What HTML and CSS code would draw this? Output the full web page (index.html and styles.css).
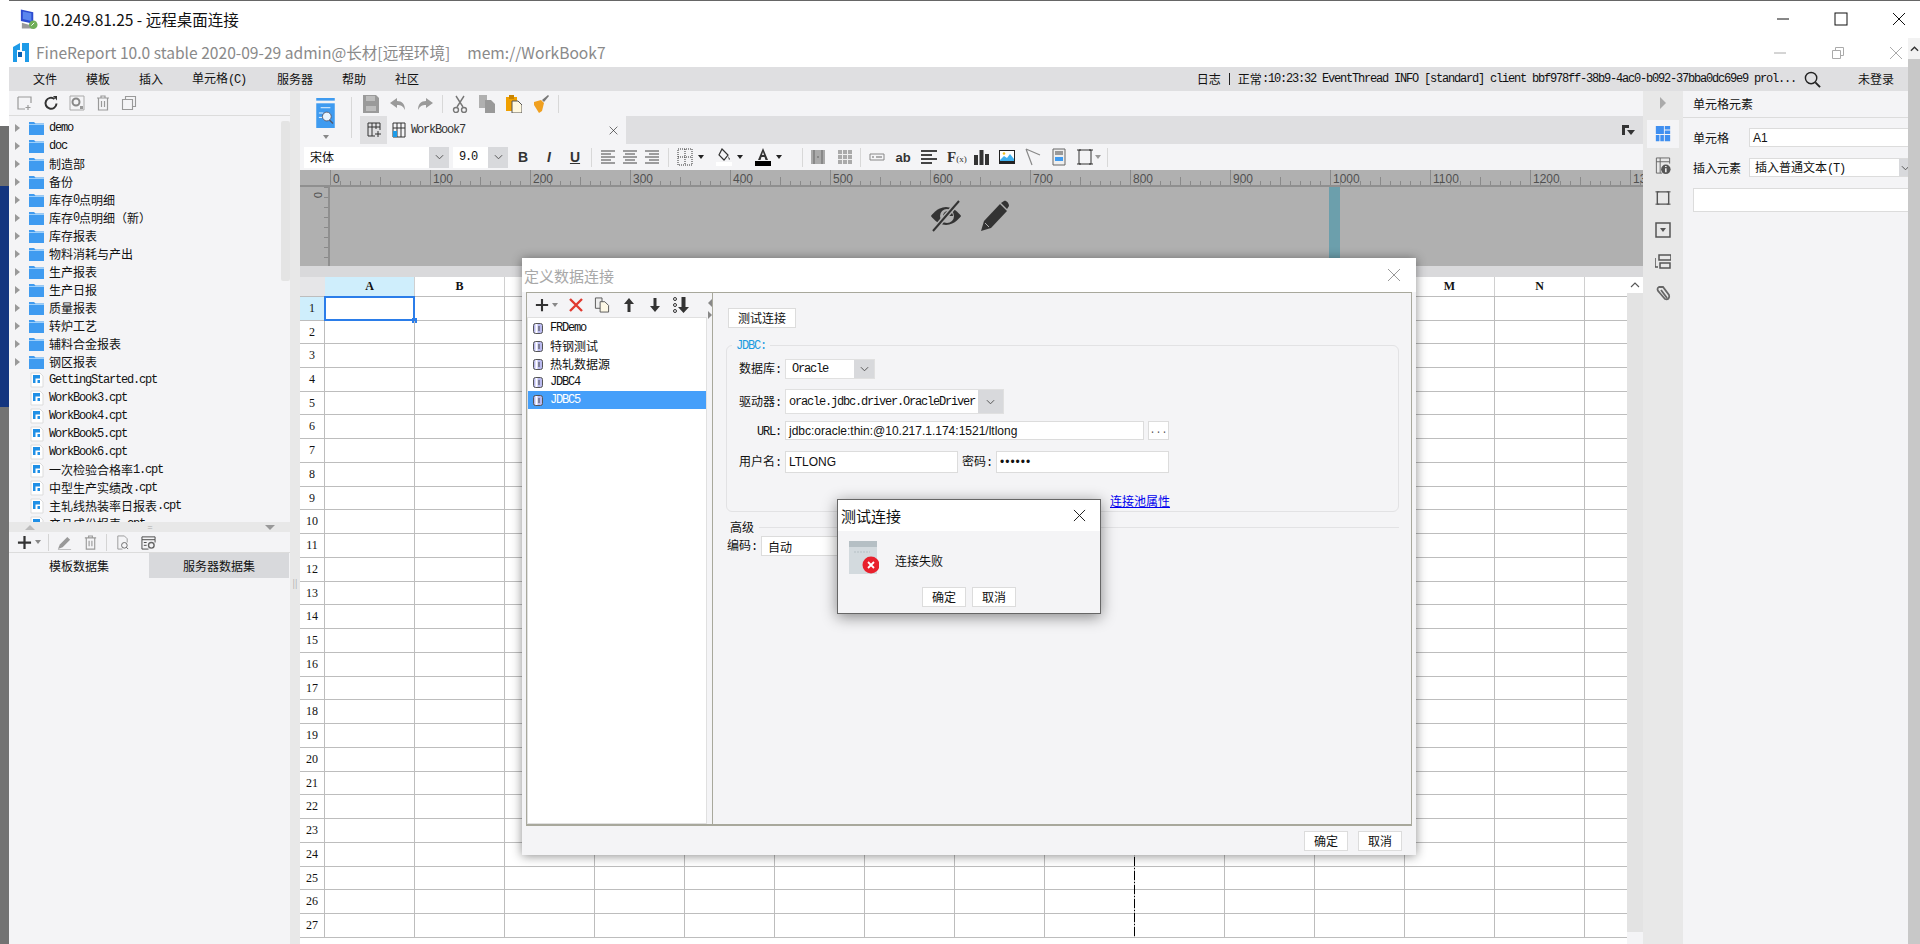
FILE: index.html
```html
<!DOCTYPE html>
<html lang="zh-CN">
<head>
  <meta charset="UTF-8" />
  <title>FineReport 远程桌面连接</title>
  <link rel="stylesheet" href="styles.css">
</head>
<body>

  <svg class="defs" width="0" height="0">
    <symbol id="folder" viewBox="0 0 15 14"><path d="M0 1h5l1.500 1.500H15V14H0z" fill="#3f9bf0"/><path d="M0 3.500h15" stroke="#9fd0fa" stroke-width="1"/></symbol>
    <symbol id="cpt" viewBox="0 0 14 16"><path d="M1 1h9l3 3v11H1z" fill="#fff" stroke="#dcdcdc"/><path d="M3 3h7v8H7.500V8H10V6.500H5.500V11H3z" fill="#1f8fe6"/></symbol>
    <symbol id="db" viewBox="0 0 10 11"><rect x="0.500" y="0.500" width="9" height="10" rx="2" fill="#b9b9ee" stroke="#555"/><path d="M3.500 1v9" stroke="#fff" stroke-width="2"/><path d="M6 3v5" stroke="#444"/></symbol>
    <symbol id="plus" viewBox="0 0 16 16"><path d="M8 1v14M1 8h14" stroke="#333" stroke-width="2.400"/></symbol>
    <symbol id="copy" viewBox="0 0 16 17"><path d="M1 1h7v11H1z" fill="#eee" stroke="#555"/><path d="M6 5h5l4 4v7H6z" fill="#fdf8e6" stroke="#555"/></symbol>
    <symbol id="trash" viewBox="0 0 14 16"><path d="M1 3h12M5 3V1h4v2M2.500 3v12h9V3M5.500 6v6M8.500 6v6" fill="none" stroke="#999" stroke-width="1.200"/></symbol>
    <symbol id="close" viewBox="0 0 14 14"><path d="M1 1l12 12M13 1L1 13" fill="none" stroke="currentColor" stroke-width="1"/></symbol>
    <symbol id="chev" viewBox="0 0 10 6"><path d="M1 1l4 4 4-4" fill="none" stroke="#555" stroke-width="1.100"/></symbol>
  </svg>

  <div class="page">
    <div class="edge">
      <div class="edge-white"></div>
      <div class="edge-grey"></div>
      <div class="edge-navy"></div>
      <div class="edge-dark"></div>
    </div>

    <div class="window">
      <!-- rdp title -->
      <div class="rdp-title">
        <svg class="rdp-icon" viewBox="0 0 20 24"><path d="M2 2l13 3v12L2 14z" fill="#2c4bd0"/><path d="M4 4l9 2v8L4 12z" fill="#5a86ee"/><path d="M3 16l11 3v3H3z" fill="#999"/><circle cx="15" cy="18" r="4.500" fill="#6fae58"/><path d="M13 19l3-3" stroke="#fff"/></svg>
        <span class="rdp-text">10.249.81.25 - 远程桌面连接</span>
        <div class="win-btns">
          <svg class="win-btn" viewBox="0 0 14 14"><path d="M1 7h12" stroke="#111" stroke-width="1"/></svg>
          <svg class="win-btn" viewBox="0 0 14 14"><rect x="1" y="1" width="12" height="12" fill="none" stroke="#111" stroke-width="1"/></svg>
          <svg class="win-btn win-close"><use href="#close"/></svg>
        </div>
      </div>

      <div class="rdp-body">
        <div class="app">
          <div class="app-title">
            <svg class="fr-logo" viewBox="0 0 16 19"><path d="M0 4l7-4v7H4v12H0z" fill="#1e9be8"/><path d="M9 0h7v19h-4V8H9z" fill="#1e9be8"/><path d="M5 9h4v5H5z" fill="#0a5fb0"/></svg>
            <span class="app-name">FineReport 10.0 stable 2020-09-29 admin@长材[远程环境]</span>
            <span class="app-file">mem://WorkBook7</span>
            <div class="app-btns">
              <svg class="app-btn" viewBox="0 0 14 14"><path d="M1 7h12" stroke="#aaa"/></svg>
              <svg class="app-btn" viewBox="0 0 14 14"><path d="M1.500 4.500h8v8h-8zM4.500 4.500v-3h8v8h-3" fill="none" stroke="#aaa"/></svg>
              <svg class="app-btn app-x"><use href="#close"/></svg>
            </div>
          </div>

          <!-- menu -->
          <div class="menubar">
            <a class="m-file">文件</a>
            <a class="m-tpl">模板</a>
            <a class="m-ins">插入</a>
            <a class="m-cell">单元格<span class="lat">(C)</span></a>
            <a class="m-srv">服务器</a>
            <a class="m-help">帮助</a>
            <a class="m-soc">社区</a>
            <div class="status">日志<i class="status-bar"></i>正常<span class="lat">:10:23:32 EventThread INFO [standard] client bbf978ff-38b9-4ac0-b092-37bba0dc69e9 prol...</span></div>
            <svg class="search" viewBox="0 0 18 18"><circle cx="7.500" cy="7.500" r="6" fill="none" stroke="#222" stroke-width="1.500"/><path d="M12 12l5 5" stroke="#222" stroke-width="2"/></svg>
            <a class="m-login">未登录</a>
          </div>

          <div class="workspace">
            <!-- left panel -->
            <div class="left">
              <div class="left-tools">
                <svg class="lt" viewBox="0 0 16 16"><path d="M1 2h13v6M1 2v12h7M11 10v5M8.500 12.500h5" fill="none" stroke="#999" stroke-width="1.200"/></svg>
                <svg class="lt" viewBox="0 0 16 16"><path d="M13.500 8.500a5.500 5.500 0 1 1-2-4.500" fill="none" stroke="#333" stroke-width="2"/><path d="M10 1l4 0v4.500z" fill="#333"/></svg>
                <svg class="lt" viewBox="0 0 16 16"><path d="M1 1h14v14H1z" fill="none" stroke="#aaa"/><circle cx="7" cy="7" r="3.500" fill="none" stroke="#888" stroke-width="2"/><path d="M11 11h3v3h-3z" fill="#999"/></svg>
                <svg class="lt"><use href="#trash"/></svg>
                <svg class="lt" viewBox="0 0 16 16"><path d="M1.500 4.500h10v10h-10zM4.500 4.500v-3h10v10h-3" fill="none" stroke="#999" stroke-width="1.100"/></svg>
              </div>
              <div class="tree-wrap">
                <ul class="tree">
                  <li><i class="tw"></i><svg class="ico-folder"><use href="#folder"/></svg><span class="lat">demo</span></li>
                  <li><i class="tw"></i><svg class="ico-folder"><use href="#folder"/></svg><span class="lat">doc</span></li>
                  <li><i class="tw"></i><svg class="ico-folder"><use href="#folder"/></svg>制造部</li>
                  <li><i class="tw"></i><svg class="ico-folder"><use href="#folder"/></svg>备份</li>
                  <li><i class="tw"></i><svg class="ico-folder"><use href="#folder"/></svg>库存<span class="lat">0</span>点明细</li>
                  <li><i class="tw"></i><svg class="ico-folder"><use href="#folder"/></svg>库存<span class="lat">0</span>点明细（新）</li>
                  <li><i class="tw"></i><svg class="ico-folder"><use href="#folder"/></svg>库存报表</li>
                  <li><i class="tw"></i><svg class="ico-folder"><use href="#folder"/></svg>物料消耗与产出</li>
                  <li><i class="tw"></i><svg class="ico-folder"><use href="#folder"/></svg>生产报表</li>
                  <li><i class="tw"></i><svg class="ico-folder"><use href="#folder"/></svg>生产日报</li>
                  <li><i class="tw"></i><svg class="ico-folder"><use href="#folder"/></svg>质量报表</li>
                  <li><i class="tw"></i><svg class="ico-folder"><use href="#folder"/></svg>转炉工艺</li>
                  <li><i class="tw"></i><svg class="ico-folder"><use href="#folder"/></svg>辅料合金报表</li>
                  <li><i class="tw"></i><svg class="ico-folder"><use href="#folder"/></svg>钢区报表</li>
                  <li><i class="tw-none"></i><svg class="ico-cpt"><use href="#cpt"/></svg><span class="lat">GettingStarted.cpt</span></li>
                  <li><i class="tw-none"></i><svg class="ico-cpt"><use href="#cpt"/></svg><span class="lat">WorkBook3.cpt</span></li>
                  <li><i class="tw-none"></i><svg class="ico-cpt"><use href="#cpt"/></svg><span class="lat">WorkBook4.cpt</span></li>
                  <li><i class="tw-none"></i><svg class="ico-cpt"><use href="#cpt"/></svg><span class="lat">WorkBook5.cpt</span></li>
                  <li><i class="tw-none"></i><svg class="ico-cpt"><use href="#cpt"/></svg><span class="lat">WorkBook6.cpt</span></li>
                  <li><i class="tw-none"></i><svg class="ico-cpt"><use href="#cpt"/></svg>一次检验合格率<span class="lat">1.cpt</span></li>
                  <li><i class="tw-none"></i><svg class="ico-cpt"><use href="#cpt"/></svg>中型生产实绩改<span class="lat">.cpt</span></li>
                  <li><i class="tw-none"></i><svg class="ico-cpt"><use href="#cpt"/></svg>主轧线热装率日报表<span class="lat">.cpt</span></li>
                  <li><i class="tw-none"></i><svg class="ico-cpt"><use href="#cpt"/></svg>产品成份报表<span class="lat">.cpt</span></li>
                </ul>
                <div class="tree-scroll"><div class="tree-thumb"></div></div>
              </div>
              <div class="left-sash"><i class="up"></i><b>=</b><i class="down"></i></div>
              <div class="ds-tools">
                <svg class="ds-plus"><use href="#plus"/></svg><i class="caret-s"></i>
                <i class="ds-sep"></i>
                <svg class="lt2" viewBox="0 0 16 16"><path d="M1 15l2-5 8-8 3 3-8 8z" fill="#999"/><path d="M1 15.500h14" stroke="#bbb"/></svg>
                <svg class="lt2"><use href="#trash"/></svg>
                <i class="ds-sep"></i>
                <svg class="lt2" viewBox="0 0 16 16"><path d="M3 1h7l3 3v4M3 1v14h5" fill="none" stroke="#999"/><circle cx="10" cy="11" r="3" fill="none" stroke="#666"/><path d="M12 13l2 2" stroke="#666"/></svg>
                <svg class="lt2" viewBox="0 0 16 16"><path d="M1 2h14v3H1zM1 5v10h7M15 5v3" fill="none" stroke="#444"/><circle cx="11" cy="11" r="3" fill="none" stroke="#666" stroke-width="1.500"/><path d="M3 8h3M3 11h3" stroke="#444"/></svg>
              </div>
              <div class="ds-tabs">
                <div class="ds-tab">模板数据集</div>
                <div class="ds-tab on">服务器数据集</div>
              </div>
            </div>
            <div class="sash"><b>||</b></div>

            <!-- center -->
            <div class="center">
              <div class="center-top">
                <div class="big-btn">
                  <svg class="big-ico" viewBox="0 0 21 34"><path d="M0 0h21v3H0z" fill="#3f9bf0"/><path d="M0 6h21v28H0z" fill="#3f9bf0"/><path d="M5 11h11M3 17h5M3 22h5" stroke="#fff"/><circle cx="12" cy="21" r="5" fill="#e8f3fd" stroke="#556"/><path d="M15 25l4 4" stroke="#556" stroke-width="1.500"/></svg>
                  <i class="caret-s big-caret"></i>
                  <i class="big-sep"></i>
                </div>
                <div class="top-col">
                  <div class="main-tools">
                    <svg class="mt" viewBox="0 0 16 18"><path d="M0 0h13l3 3v15H0z" fill="#9a9a9a"/><path d="M3 1h9v5H3z" fill="#bdbdbd"/><path d="M3 11h10v5H3z" fill="#bdbdbd"/></svg>
                    <svg class="mt" viewBox="0 0 16 16"><path d="M7 2L0 7l7 5V9c4 0 6 1 8 5 0-6-3-9-8-9z" fill="#9a9a9a"/></svg>
                    <svg class="mt" viewBox="0 0 16 16"><path d="M9 2l7 5-7 5V9c-4 0-6 1-8 5 0-6 3-9 8-9z" fill="#9a9a9a"/></svg>
                    <i class="mt-sep"></i>
                    <svg class="mt" viewBox="0 0 16 18"><path d="M4 1l7 11M12 1L5 12" stroke="#777" stroke-width="1.400"/><circle cx="4" cy="15" r="2.500" fill="none" stroke="#777" stroke-width="1.400"/><circle cx="12" cy="15" r="2.500" fill="none" stroke="#777" stroke-width="1.400"/></svg>
                    <svg class="mt" viewBox="0 0 16 18"><path d="M0 0h8v13H0z" fill="#b0b0b0"/><path d="M6 5h6l4 4v9H6z" fill="#999"/></svg>
                    <svg class="mt" viewBox="0 0 16 18"><path d="M0 2h11v14H0z" fill="#f0a000"/><path d="M3 0h5v4H3z" fill="#c98400"/><path d="M6 6h6l4 4v8H6z" fill="#fff8e0" stroke="#555"/></svg>
                    <svg class="mt" viewBox="0 0 16 18"><path d="M9 5l6-5 1 1-5 6z" fill="#777"/><path d="M1 7l7-2 3 3-2 8-3 2-5-8z" fill="#f0a020"/></svg>
                    <i class="mt-sep"></i>
                  </div>
                  <div class="tab-row">
                    <div class="tab-new"><svg viewBox="0 0 14 16"><path d="M1 1h12v7M1 1v13h7M1 5h12M5 1v13M9 1v6M11 9v6M8 12h6" fill="none" stroke="#333"/></svg></div>
                    <div class="tab">
                      <svg viewBox="0 0 14 16"><path d="M1 1h12v14H1zM1 6h12M5 1v14M9 1v14" fill="none" stroke="#333"/><path d="M1 9h4v6H1z" fill="#1e9be8"/></svg>
                      <span class="lat">WorkBook7</span>
                      <svg class="tab-x"><use href="#close"/></svg>
                    </div>
                    <svg class="tab-menu" viewBox="0 0 13 12"><path d="M0 0h7v3H3v7H0z" fill="#333"/><path d="M5 5h8l-4 5z" fill="#333"/></svg>
                  </div>
                </div>
              </div>

              <div class="format-row">
                <div class="sel sel-font"><span>宋体</span><i class="sel-arrow"><svg><use href="#chev"/></svg></i></div>
                <div class="sel sel-size"><span class="lat">9.0</span><i class="sel-arrow"><svg><use href="#chev"/></svg></i></div>
                <div class="fg fg-biu"><b class="f-b">B</b><b class="f-i">I</b><b class="f-u">U</b></div>
                <i class="f-sep"></i>
                <div class="fg fg-align">
                  <svg class="f16" viewBox="0 0 16 14"><path d="M1 1h14M1 4h10M1 7h14M1 10h10M1 13h14" stroke="#444"/></svg>
                  <svg class="f16" viewBox="0 0 16 14"><path d="M1 1h14M3 4h10M1 7h14M3 10h10M1 13h14" stroke="#444"/></svg>
                  <svg class="f16" viewBox="0 0 16 14"><path d="M1 1h14M5 4h10M1 7h14M5 10h10M1 13h14" stroke="#444"/></svg>
                </div>
                <i class="f-sep"></i>
                <div class="dd"><svg class="f16" viewBox="0 0 16 18"><path d="M1 1h14v16H1zM8 1v16M1 9h14" fill="none" stroke="#333" stroke-dasharray="1 1"/></svg><i class="caret-k"></i></div>
                <div class="dd"><svg class="f16" viewBox="0 0 16 18"><path d="M6 1l6 6-4 5-5-5z" fill="none" stroke="#333" stroke-width="1.200"/><path d="M12 8l2 3-1 1z" fill="#333"/><path d="M0 14h16v4H0z" fill="#fff"/></svg><i class="caret-k"></i></div>
                <div class="dd"><svg class="f16" viewBox="0 0 16 18"><path d="M8 0l5 12h-2.500l-1-3h-3l-1 3H3zM8 4L7 7h2z" fill="#333" fill-rule="evenodd"/><path d="M0 13h16v5H0z" fill="#000"/></svg><i class="caret-k"></i></div>
                <i class="f-sep"></i>
                <div class="fg fg-grid">
                  <svg class="f14" viewBox="0 0 14 14"><path d="M0 0h14v14H0z" fill="#aaa"/><path d="M3 0v14M11 0v14" stroke="#666"/><path d="M6 6h2v2H6z" fill="#888"/></svg>
                  <svg class="f14" viewBox="0 0 14 14"><path d="M0 0h14v14H0z" fill="#aaa"/><path d="M0 4.500h14M0 9.500h14M4.500 0v14M9.500 0v14" stroke="#eee"/></svg>
                </div>
                <i class="f-sep"></i>
                <div class="fg fg-ins">
                  <svg class="f16" viewBox="0 0 16 14"><path d="M1 4h14v6H1z" fill="none" stroke="#888"/><path d="M3 7h2M7 7h6" stroke="#666"/></svg>
                  <b class="f-ab">ab</b>
                  <svg class="f16" viewBox="0 0 16 16"><path d="M0 2h16M0 6h11M0 10h16M0 14h11" stroke="#444" stroke-width="2"/></svg>
                  <span class="f-fx">F<small>(x)</small></span>
                  <svg class="f16" viewBox="0 0 16 16"><path d="M1 6h4v10H1zM6.500 1h4v15h-4zM12 5h4v11h-4z" fill="#333"/></svg>
                  <svg class="f16" viewBox="0 0 16 16"><path d="M0 1h16v14H0z" fill="#222"/><path d="M1 2h14v9H1z" fill="#fff"/><path d="M1 11l4-4 3 2 3-4 4 5v2H1z" fill="#3fb0ee"/><circle cx="5" cy="4.500" r="1.300" fill="#f0c020"/></svg>
                  <svg class="f16" viewBox="0 0 16 18"><path d="M1 1l14 6M1 1l6 16" fill="none" stroke="#888" stroke-width="1.200"/></svg>
                  <svg class="f16" viewBox="0 0 16 18"><path d="M2 1h12v16H2z" fill="#eee" stroke="#666"/><path d="M4 4h8M4 6h8" stroke="#444"/><path d="M4 9h8v4H4z" fill="#3f9bf0"/></svg>
                  <svg class="f16" viewBox="0 0 16 18"><path d="M2 2h12v14H2z" fill="none" stroke="#333"/><path d="M0 2h4M12 2h4M0 16h4M12 16h4" stroke="#333"/></svg>
                </div>
                <i class="caret-g"></i>
                <i class="f-sep fs-last"></i>
              </div>

              <!-- ruler + design area -->
              <div class="ruler-h">
                <span>0</span><span>100</span><span>200</span><span>300</span><span>400</span><span>500</span><span>600</span><span>700</span><span>800</span><span>900</span><span>1000</span><span>1100</span><span>1200</span><span>1300</span>
              </div>
              <div class="design">
                <div class="ruler-v"><span>0</span></div>
                <div class="design-icons">
                  <svg class="eye" viewBox="0 0 32 32"><path d="M1 16s6-9 15-9 15 9 15 9-6 9-15 9S1 16 1 16z" fill="#333"/><circle cx="17" cy="16" r="7" fill="#b0b0b0"/><path d="M13 16a5 5 0 0 1 10 0z" fill="#333"/><path d="M29 1L3 31" stroke="#b0b0b0" stroke-width="5"/><path d="M29 1L3 31" stroke="#333" stroke-width="2"/></svg>
                  <svg class="pencil" viewBox="0 0 30 32"><path d="M1 31l3-10L20 4l7 7-16 17z" fill="#333"/><path d="M21 3l3-2c2-1 5 2 5 5l-2 3z" fill="#333"/><path d="M5 23l4 4" stroke="#b0b0b0"/></svg>
                </div>
                <div class="paper-edge"></div>
              </div>
              <div class="design-foot"></div>

              <!-- sheet -->
              <div class="sheet">
                <div class="col-head">
                  <div class="corner"></div>
                  <div class="col on">A</div><div class="col">B</div><div class="col">C</div><div class="col">D</div><div class="col">E</div><div class="col">F</div><div class="col">G</div><div class="col">H</div><div class="col">I</div><div class="col">J</div><div class="col">K</div><div class="col">L</div><div class="col">M</div><div class="col">N</div><div class="col"></div>
                </div>
                <div class="rows">
                  <div class="row"><span class="num on">1</span><div class="selected"></div></div>
                  <div class="row"><span class="num">2</span></div>
                  <div class="row"><span class="num">3</span></div>
                  <div class="row"><span class="num">4</span></div>
                  <div class="row"><span class="num">5</span></div>
                  <div class="row"><span class="num">6</span></div>
                  <div class="row"><span class="num">7</span></div>
                  <div class="row"><span class="num">8</span></div>
                  <div class="row"><span class="num">9</span></div>
                  <div class="row"><span class="num">10</span></div>
                  <div class="row"><span class="num">11</span></div>
                  <div class="row"><span class="num">12</span></div>
                  <div class="row"><span class="num">13</span></div>
                  <div class="row"><span class="num">14</span></div>
                  <div class="row"><span class="num">15</span></div>
                  <div class="row"><span class="num">16</span></div>
                  <div class="row"><span class="num">17</span></div>
                  <div class="row"><span class="num">18</span></div>
                  <div class="row"><span class="num">19</span></div>
                  <div class="row"><span class="num">20</span></div>
                  <div class="row"><span class="num">21</span></div>
                  <div class="row"><span class="num">22</span></div>
                  <div class="row"><span class="num">23</span></div>
                  <div class="row"><span class="num">24</span></div>
                  <div class="row"><span class="num">25</span></div>
                  <div class="row"><span class="num">26</span></div>
                  <div class="row"><span class="num">27</span></div>
                  <div class="page-break"></div>
                </div>
                <div class="sheet-scroll">
                  <div class="ss-up"><svg><use href="#chev"/></svg></div>
                  <div class="ss-thumb"></div>
                </div>
              </div>
            </div>

            <!-- side strip -->
            <div class="strip">
              <i class="strip-arrow"></i>
              <div class="strip-on"><svg viewBox="0 0 16 19"><path d="M0 0h9v9H0zM10 0h6v4h-6zM10 5h6v4h-6zM0 10h4v7H0zM5 10h4v7H5zM10 10h6v7h-6z" fill="#3f8ff0"/></svg></div>
              <svg class="strip-ico" viewBox="0 0 16 19"><path d="M1 1h14v6M1 1v16h6M1 5h14M5 1v16" fill="none" stroke="#666"/><circle cx="11" cy="13" r="5" fill="#555"/><path d="M11 9.500v1M11 12v4" stroke="#fff" stroke-width="1.500"/></svg>
              <svg class="strip-ico" viewBox="0 0 16 19"><path d="M2 3h12v13H2z" fill="none" stroke="#555" stroke-width="1.500"/><path d="M0 3h4M12 3h4M0 16h4M12 16h4" stroke="#555"/></svg>
              <svg class="strip-ico" viewBox="0 0 16 16"><path d="M1 1h14v14H1z" fill="none" stroke="#555" stroke-width="1.500"/><path d="M5 6h6l-3 4z" fill="#555"/></svg>
              <svg class="strip-ico" viewBox="0 0 16 16"><path d="M4 1h12v5H4zM5 9h10v5H5zM0 4v9h3" fill="none" stroke="#555" stroke-width="1.500"/></svg>
              <svg class="strip-ico" viewBox="0 0 16 18"><path d="M4 2l4 0 6 8c1 3-1 5-4 4L4 7C2 5 2 3 4 2zM6 5l6 8" fill="none" stroke="#666" stroke-width="1.800"/></svg>
            </div>

            <!-- properties -->
            <div class="props">
              <div class="props-head">单元格元素</div>
              <div class="prop-row"><label>单元格</label><div class="prop-input">A1</div></div>
              <div class="prop-row prop-row2"><label>插入元素</label><div class="prop-sel"><span>插入普通文本<span class="lat">(T)</span></span><i><svg><use href="#chev"/></svg></i></div></div>
              <div class="prop-blank"></div>
            </div>
          </div>
        </div>

        <div class="rdp-scroll">
          <div class="rs-up"><svg viewBox="0 0 10 6"><path d="M1 5l4-4 4 4" fill="none" stroke="#333" stroke-width="1.500"/></svg></div>
          <div class="rs-thumb"></div>
        </div>
      </div>
    </div>
  </div>

  <!-- define connection dialog -->
  <div class="dialog">
    <div class="dlg-title">
      <span>定义数据连接</span>
      <svg class="dlg-x"><use href="#close"/></svg>
    </div>
    <div class="dlg-body">
      <div class="conn-left">
        <div class="conn-tools">
          <svg class="ct-plus"><use href="#plus"/></svg><i class="caret-s"></i>
          <svg class="ct ct-x" viewBox="0 0 14 14"><path d="M1 1l12 12M13 1L1 13" stroke="#e03a30" stroke-width="2.400"/></svg>
          <svg class="ct ct-copy"><use href="#copy"/></svg>
          <svg class="ct ct-up" viewBox="0 0 10 14"><path d="M5 0l5 6H6.500v8h-3V6H0z" fill="#333"/></svg>
          <svg class="ct ct-down" viewBox="0 0 10 14"><path d="M5 14L0 8h3.500V0h3v8H10z" fill="#333"/></svg>
          <svg class="ct ct-sort" viewBox="0 0 16 16"><circle cx="2" cy="2" r="1.500" fill="none" stroke="#333"/><circle cx="2" cy="8" r="1.500" fill="none" stroke="#333"/><circle cx="2" cy="14" r="1.500" fill="none" stroke="#333"/><path d="M10.500 16L5 10h3.500V0h4v10H16z" fill="#333"/></svg>
        </div>
        <ul class="conn-list">
          <li><svg class="ico-db"><use href="#db"/></svg><span class="lat">FRDemo</span></li>
          <li><svg class="ico-db"><use href="#db"/></svg>特钢测试</li>
          <li><svg class="ico-db"><use href="#db"/></svg>热轧数据源</li>
          <li><svg class="ico-db"><use href="#db"/></svg><span class="lat">JDBC4</span></li>
          <li class="on"><svg class="ico-db"><use href="#db"/></svg><span class="lat">JDBC5</span></li>
        </ul>
      </div>
      <div class="splitter"><i class="spl-l"></i><i class="spl-r"></i></div>
      <div class="conn-right">
        <div class="btn btn-test">测试连接</div>
        <fieldset class="jdbc">
          <legend><span class="lat">JDBC:</span></legend>
          <div class="f-row r-db">
            <label>数据库<span class="lat">:</span></label>
            <div class="combo c-db"><span class="lat">Oracle</span><i><svg><use href="#chev"/></svg></i></div>
          </div>
          <div class="f-row r-drv">
            <label>驱动器<span class="lat">:</span></label>
            <div class="combo c-drv"><span class="lat">oracle.jdbc.driver.OracleDriver</span><i><svg><use href="#chev"/></svg></i></div>
          </div>
          <div class="f-row r-url">
            <label><span class="lat">URL:</span></label>
            <div class="txt t-url">jdbc:oracle:thin:@10.217.1.174:1521/ltlong</div>
            <div class="txt t-more">...</div>
          </div>
          <div class="f-row r-user">
            <label>用户名<span class="lat">:</span></label>
            <div class="txt t-user">LTLONG</div>
            <span class="pw-label">密码<span class="lat">:</span></span>
            <div class="txt t-pass">••••••</div>
          </div>
          <a class="pool-link">连接池属性</a>
        </fieldset>
        <div class="adv-head"><span>高级</span><i></i></div>
        <div class="adv-row"><label>编码<span class="lat">:</span></label><div class="txt t-enc">自动</div></div>
      </div>
    </div>
    <div class="dlg-foot">
      <div class="btn btn-ok">确定</div>
      <div class="btn btn-ok">取消</div>
    </div>
  </div>

  <!-- test result dialog -->
  <div class="msgbox">
    <div class="msg-title">
      <span>测试连接</span>
      <svg class="msg-x"><use href="#close"/></svg>
    </div>
    <div class="msg-body">
      <svg class="msg-ico" viewBox="0 0 30 33"><path d="M0 0h28v33H0z" fill="#d3dade"/><path d="M0 0h28v6H0z" fill="#b5bfc4"/><path d="M5 11h16" stroke="#b5bfc4" stroke-dasharray="2 1"/><circle cx="22" cy="24" r="8.500" fill="#e8202c"/><path d="M19 21l6 6M25 21l-6 6" stroke="#fff" stroke-width="1.800"/></svg>
      <span class="msg-text">连接失败</span>
    </div>
    <div class="msg-foot">
      <div class="btn btn-ok">确定</div>
      <div class="btn btn-ok">取消</div>
    </div>
  </div>

</body>
</html>
```

FILE: styles.css
```css
* { margin: 0; padding: 0; box-sizing: border-box; }
html, body { width: 1920px; height: 944px; overflow: hidden; }
body { position: relative; background: #fff; color: #111; font: 12px "Noto Sans CJK SC", "Liberation Sans", sans-serif; line-height: 1; }
ul { list-style: none; }
i { font-style: normal; display: block; flex: none; }
svg { display: block; flex: none; }
.defs { position: absolute; }
.lat { font-family: "Liberation Mono", "Noto Sans CJK SC", monospace; letter-spacing: -1.200px; }

.page { display: flex; width: 1920px; height: 944px; }

/* desktop behind the window */
.edge { width: 9px; flex: none; display: flex; flex-direction: column; }
.edge-white { height: 126px; background: #fff; }
.edge-grey { height: 60px; background: #6f6f6f; }
.edge-navy { height: 221px; background: #14357f; }
.edge-dark { flex: 1; background: #737373; }

.window { flex: 1; display: flex; flex-direction: column; min-width: 0; }
.rdp-title { height: 38px; flex: none; display: flex; align-items: center; border-top: 1px solid #666; padding-bottom: 2px; background: #fff; }
.rdp-icon { width: 19px; height: 24px; margin-left: 10px; }
.rdp-text { margin-left: 5px; font: 15.500px "Noto Sans CJK SC", sans-serif; color: #111; }
.win-btns { margin-left: auto; display: flex; align-items: center; }
.win-btn { width: 14px; height: 14px; margin-right: 44px; color: #111; }
.win-close { margin-right: 14px; }

.rdp-body { flex: 1; display: flex; min-height: 0; }
.app { flex: 1; display: flex; flex-direction: column; min-width: 0; }
.rdp-scroll { width: 12px; flex: none; display: flex; flex-direction: column; }
.rs-up { height: 21px; background: #f2f2f2; display: flex; align-items: center; justify-content: center; }
.rs-up svg { width: 9px; height: 6px; }
.rs-thumb { flex: 1; background: #c8c8c8; }

.app-title { height: 29px; flex: none; display: flex; align-items: center; color: #8a8a8a; }
.fr-logo { width: 16px; height: 19px; margin-left: 4px; }
.app-name { margin-left: 7px; font-size: 15.600px; }
.app-file { margin-left: 17px; font-size: 15.600px; }
.app-btns { margin-left: auto; display: flex; align-items: center; }
.app-btn { width: 14px; height: 14px; margin-right: 44px; }
.app-x { margin-right: 5px; color: #aaa; }

/* menu bar */
.menubar { height: 24px; flex: none; background: #dfdfe1; display: flex; align-items: center; }
.menubar a { color: #111; }
.m-file { margin-left: 24px; }
.m-tpl { margin-left: 29px; }
.m-ins { margin-left: 29px; }
.m-cell { margin-left: 29px; }
.m-srv { margin-left: 31px; }
.m-help { margin-left: 29px; }
.m-soc { margin-left: 29px; }
.status { margin-left: auto; display: flex; align-items: center; white-space: nowrap; }
.status-bar { width: 1px; height: 12px; background: #222; margin: 0 8px; }
.search { width: 17px; height: 17px; margin-left: 8px; }
.m-login { margin-left: 37px; margin-right: 14px; }

.workspace { flex: 1; display: flex; min-height: 0; }

/* left panel */
.left { width: 281px; flex: none; background: #f4f4f6; display: flex; flex-direction: column; }
.left-tools { height: 25px; flex: none; display: flex; align-items: center; gap: 10px; padding-left: 8px; border-bottom: 1px solid #dcdcdc; }
.lt { width: 16px; height: 16px; }
.tree-wrap { height: 406px; flex: none; display: flex; overflow: hidden; }
.tree { flex: 1; padding-top: 3px; }
.tree li { height: 18px; display: flex; align-items: center; white-space: nowrap; }
.tw { width: 0; height: 0; margin-left: 6px; border-left: 5px solid #999; border-top: 4px solid transparent; border-bottom: 4px solid transparent; }
.tw-none { width: 0; margin-left: 11px; }
.ico-folder { width: 15px; height: 14px; margin-left: 9px; margin-right: 5px; }
.ico-cpt { width: 14px; height: 16px; margin-left: 10px; margin-right: 5px; }
.tree-scroll { width: 9px; flex: none; padding-top: 5px; }
.tree-thumb { height: 160px; background: #e4e4e4; border-radius: 2px; }
.left-sash { height: 10px; flex: none; background: #e8e8e8; display: flex; align-items: center; justify-content: space-between; padding: 0 15px 0 16px; color: #aaa; font-size: 9px; }
.left-sash b { font-weight: normal; }
.up { width: 0; height: 0; border: 5px solid transparent; border-top: 0; border-bottom: 5px solid #bbb; }
.down { width: 0; height: 0; border: 5px solid transparent; border-bottom: 0; border-top: 5px solid #999; }
.ds-tools { height: 21px; flex: none; display: flex; align-items: center; padding-left: 8px; border-bottom: 1px solid #dcdcdc; }
.ds-plus { width: 15px; height: 15px; }
.caret-s { width: 0; height: 0; border: 3px solid transparent; border-bottom: 0; border-top: 4px solid #888; margin-left: 3px; }
.ds-sep { width: 1px; height: 17px; background: #d4d4d4; margin: 0 8px 0 7px; }
.lt2 { width: 15px; height: 15px; margin-right: 11px; }
.ds-tools .lt2 + .ds-sep { margin-left: -3px; }
.ds-tabs { height: 25px; flex: none; display: flex; }
.ds-tab { width: 140px; display: flex; align-items: center; justify-content: center; }
.ds-tab.on { background: #d8d9dc; }
.sash { width: 10px; flex: none; background: #e8e8e8; display: flex; align-items: center; justify-content: center; color: #aaa; font-size: 9px; }
.sash b { font-weight: normal; position: relative; top: 66px; }

/* center column */
.center { flex: 1; min-width: 0; display: flex; flex-direction: column; overflow: hidden; background: #fff; }
.center-top { height: 53px; flex: none; display: flex; background: #f4f4f6; }
.big-btn { width: 60px; flex: none; position: relative; padding: 7px 0 0 15px; }
.big-ico { width: 21px; height: 30px; }
.big-caret { margin: 7px 0 0 8px; }
.big-sep { position: absolute; left: 51px; top: 6px; width: 1px; height: 41px; background: #d8d8d8; }
.top-col { flex: 1; display: flex; flex-direction: column; min-width: 0; }
.main-tools { height: 25px; flex: none; display: flex; align-items: center; gap: 11px; padding-left: 3px; }
.mt { width: 16px; height: 18px; }
.mt-sep { width: 1px; height: 18px; background: #d8d8d8; margin: 0 -2px; }
.tab-row { height: 28px; flex: none; display: flex; align-items: stretch; background: #dfdfe1; }
.tab-new { width: 27px; display: flex; align-items: center; justify-content: center; }
.tab-new svg { width: 14px; height: 16px; }
.tab { width: 239px; background: #f4f4f6; display: flex; align-items: center; padding-left: 5px; }
.tab > svg:first-child { width: 14px; height: 16px; margin-right: 5px; }
.tab .lat { color: #333; }
.tab-x { width: 9px; height: 9px; margin-left: auto; margin-right: 8px; color: #222; }
.tab-menu { width: 13px; height: 12px; margin: 9px 8px 0 auto; }

.format-row { height: 26px; flex: none; background: #f4f4f6; display: flex; align-items: center; padding-left: 4px; }
.sel { height: 21px; display: flex; align-items: center; background: #fff; }
.sel span { padding-left: 6px; flex: 1; }
.sel-font { width: 145px; }
.sel-size { width: 55px; margin-left: 4px; }
.sel-arrow { width: 20px; height: 21px; background: #d8d9dc; display: flex; align-items: center; justify-content: center; }
.sel-arrow svg { width: 9px; height: 6px; }
.fg { display: flex; align-items: center; }
.fg-biu { margin-left: 7px; gap: 10px; }
.fg-biu b { width: 16px; text-align: center; font: bold 14px "Liberation Sans", sans-serif; color: #333; }
.fg-biu .f-i { font-style: italic; }
.f-u { text-decoration: underline; }
.f-sep { width: 1px; height: 19px; background: #d8d8d8; margin: 0 8px; }
.fg-align { gap: 6px; }
.f16 { width: 16px; height: 18px; }
.f14 { width: 14px; height: 14px; }
.dd { width: 39px; display: flex; align-items: center; }
.caret-k { width: 0; height: 0; border: 3px solid transparent; border-bottom: 0; border-top: 4px solid #222; margin-left: 5px; }
.fg-grid { gap: 13px; }
.fg-ins { gap: 10px; }
.f-ab { width: 16px; text-align: center; font: bold 13px "Liberation Sans", sans-serif; color: #333; }
.f-fx { width: 16px; font: bold 15px "Liberation Serif", serif; color: #333; white-space: nowrap; }
.f-fx small { font-size: 9px; font-weight: normal; }
.caret-g { width: 0; height: 0; border: 3px solid transparent; border-bottom: 0; border-top: 4px solid #999; margin-left: 2px; }
.fs-last { margin-left: 6px; }

/* ruler */
.ruler-h { height: 17px; flex: none; display: flex; padding-left: 30px; background-color: #b0b0b0; border-bottom: 2px solid #8f8f8f; }
.ruler-h span { width: 100px; flex: none; padding: 2px 0 0 2px; font: 12px "Liberation Sans", sans-serif; color: #505050; border-left: 1px solid #8a8a8a;
  background: repeating-linear-gradient(90deg, #8a8a8a 0 1px, transparent 1px 10px) 9px 100% / 100% 4px no-repeat, linear-gradient(#8a8a8a, #8a8a8a) 49px 100% / 1px 8px no-repeat; }
.design { height: 79px; flex: none; background: #b0b0b0; display: flex; position: relative; }
.ruler-v { width: 30px; flex: none; border-right: 2px solid #8f8f8f; padding-left: 14px; padding-top: 3px; color: #505050;
  background: repeating-linear-gradient(180deg, #8a8a8a 0 1px, transparent 1px 10px) right / 4px 100% no-repeat; }
.ruler-v span { display: block; font: 11px "Liberation Sans", sans-serif; transform: rotate(90deg); width: 8px; }
.design-icons { display: flex; align-items: flex-start; margin-left: 600px; padding-top: 13px; gap: 18px; }
.eye { width: 32px; height: 32px; }
.pencil { width: 30px; height: 32px; }
.paper-edge { position: absolute; left: 1029px; top: 0; width: 11px; height: 100%; background: #6c9fac; }
.design-foot { height: 11px; flex: none; background: #d9d9db; }

/* sheet */
.sheet { flex: 1; min-height: 0; position: relative; overflow: hidden; }
.col-head { height: 20px; display: flex; background: #fff; border-bottom: 1px solid #bdbdbd; width: 1327px; overflow: hidden; }
.corner { width: 25px; flex: none; background: #e6e6e8; }
.col { width: 90px; flex: none; font: bold 12px "Liberation Serif", serif; display: flex; align-items: center; justify-content: center; border-right: 1px solid #d0d0d0; }
.col:last-child { border-right: 0; }
.col.on { background: #cfeefc; }
.rows { width: 1327px; position: relative; }
.row { height: 24px; display: flex; border-bottom: 1px solid #bdbdbd; position: relative;
  background: repeating-linear-gradient(90deg, transparent 0 89px, #bdbdbd 89px 90px) 25px 0 no-repeat; }
.row:nth-child(4n+1), .row:nth-child(2) { height: 23px; }
.row:first-child { height: 24px; }
.num { width: 25px; flex: none; display: flex; align-items: center; justify-content: center; font: 12px "Liberation Serif", serif; background: #fff; border-right: 1px solid #bdbdbd; }
.num.on { background: #cfeefc; }
.selected { position: absolute; left: 24px; top: -1px; width: 91px; height: 25px; border: 2px solid #2b7de9; }
.selected::after { content: ""; position: absolute; right: -4px; bottom: -4px; width: 5px; height: 5px; background: #2b7de9; }
.page-break { position: absolute; left: 834px; top: 0; bottom: 0; width: 1px; background: repeating-linear-gradient(180deg, #000 0 9px, transparent 9px 11px, #000 11px 12px, transparent 12px 14px); }
.sheet-scroll { position: absolute; left: 1327px; top: 0; bottom: 0; width: 16px; background: #f4f4f6; }
.ss-up { height: 16px; background: #fff; display: flex; align-items: center; justify-content: center; transform: scaleY(-1); }
.ss-up svg { width: 10px; height: 6px; }
.ss-thumb { height: 639px; background: #e3e3e3; }

/* side strip */
.strip { width: 40px; flex: none; background: #e8e8e8; display: flex; flex-direction: column; align-items: center; }
.strip-arrow { width: 0; height: 0; margin-top: 6px; border-left: 6px solid #aaa; border-top: 6px solid transparent; border-bottom: 6px solid transparent; }
.strip-on { width: 32px; height: 28px; margin-top: 11px; background: #f4f4f6; display: flex; align-items: center; justify-content: center; }
.strip-on svg { width: 16px; height: 17px; }
.strip-ico { width: 16px; height: 18px; margin-top: 14px; }
.strip-on + .strip-ico { margin-top: 9px; }

/* properties */
.props { width: 225px; flex: none; background: #f4f4f6; }
.props-head { height: 27px; border-bottom: 1px solid #dcdcdc; display: flex; align-items: center; padding-left: 10px; }
.prop-row { display: flex; align-items: center; padding-left: 10px; margin-top: 10px; }
.prop-row2 { margin-top: 11px; }
.prop-row label { width: 56px; flex: none; }
.prop-input { flex: 1; height: 19px; background: #fff; border: 1px solid #dcdcdc; border-right: 0; display: flex; align-items: center; padding-left: 3px; font: 12px "Liberation Sans", sans-serif; }
.prop-sel { flex: 1; height: 19px; background: #fff; border: 1px solid #dcdcdc; border-right: 0; display: flex; align-items: center; }
.prop-sel > span { flex: 1; padding-left: 5px; }
.prop-sel i { width: 9px; height: 17px; background: #d8d9dc; overflow: hidden; }
.prop-sel i svg { width: 9px; height: 6px; margin: 6px 0 0 2px; }
.prop-blank { margin: 11px 0 0 10px; height: 24px; background: #fff; border: 1px solid #dcdcdc; border-right: 0; }

/* dialogs */
.dialog { position: absolute; left: 522px; top: 258px; width: 894px; height: 597px; background: #f4f4f6; box-shadow: 0 1px 10px rgba(0,0,0,.45); display: flex; flex-direction: column; }
.dlg-title { height: 34px; flex: none; background: #fff; display: flex; align-items: center; justify-content: space-between; padding: 0 15px 0 2px; color: #a8a8a8; font-size: 15px; }
.dlg-x { width: 14px; height: 14px; color: #999; }
.dlg-body { flex: 1; display: flex; margin: 0 4px; border: 1px solid #a8a89c; border-width: 1px 1px 2px; min-height: 0; }
.conn-left { width: 180px; flex: none; display: flex; flex-direction: column; }
.conn-tools { height: 24px; flex: none; display: flex; align-items: center; padding-left: 8px; }
.ct-plus { width: 14px; height: 14px; }
.ct { height: 14px; }
.ct-x { width: 14px; margin-left: 11px; }
.ct-copy { width: 16px; height: 16px; margin-left: 11px; }
.ct-up { width: 10px; margin-left: 14px; }
.ct-down { width: 10px; margin-left: 16px; }
.ct-sort { width: 16px; height: 16px; margin-left: 13px; }
.conn-list { flex: 1; background: #fff; border: 1px solid #e0e0e0; padding-top: 1px; }
.conn-list li { height: 18px; display: flex; align-items: center; padding-left: 5px; }
.conn-list li.on { background: #459ffa; color: #fff; }
.ico-db { width: 10px; height: 11px; margin-right: 7px; }
.splitter { width: 6px; flex: none; border-right: 1px solid #a8a89c; position: relative; }
.spl-l { position: absolute; top: 6px; left: 1px; width: 0; height: 0; border-right: 4px solid #888; border-top: 4px solid transparent; border-bottom: 4px solid transparent; }
.spl-r { position: absolute; top: 18px; left: 1px; width: 0; height: 0; border-left: 4px solid #888; border-top: 4px solid transparent; border-bottom: 4px solid transparent; }
.conn-right { flex: 1; min-width: 0; padding: 15px 0 0 13px; }
.btn { height: 20px; display: flex; align-items: center; justify-content: center; background: #fff; border: 1px solid #dcdcdc; flex: none; }
.btn-test { width: 68px; margin-left: 2px; }
.btn-ok { width: 44px; }
.jdbc { width: 673px; height: 175px; margin-top: 9px; border: 1px solid #e2e2e4; border-radius: 6px; padding: 0; position: relative; }
.jdbc legend { margin-left: 5px; padding: 0 4px; line-height: 14px; }
.jdbc legend .lat { color: #1a9be0; }
.f-row { display: flex; align-items: center; }
.f-row label { width: 54px; flex: none; text-align: right; margin-right: 4px; }
.r-db { margin-top: 6px; height: 20px; }
.r-drv { margin-top: 10px; height: 25px; }
.r-url { margin-top: 7px; height: 19px; }
.r-user { margin-top: 11px; height: 22px; }
.combo { height: 100%; display: flex; align-items: center; background: #fff; border: 1px solid #e0e0e0; }
.combo .lat { flex: 1; padding-left: 3px; white-space: nowrap; }
.combo i { width: 25px; height: 100%; background: #d8d9dc; display: flex; align-items: center; justify-content: center; }
.combo i svg { width: 9px; height: 6px; }
.c-db { width: 90px; }
.c-db .lat { padding-left: 6px; }
.c-db i { width: 20px; }
.c-drv { width: 219px; }
.txt { height: 100%; background: #fff; border: 1px solid #dcdcdc; display: flex; align-items: center; padding-left: 3px; font: 12px "Liberation Sans", sans-serif; flex: none; }
.t-url { width: 359px; }
.t-more { width: 21px; margin-left: 4px; font: 10px "Liberation Mono", monospace; justify-content: center; padding: 0; color: #555; }
.t-user { width: 173px; }
.pw-label { width: 38px; flex: none; padding-left: 4px; }
.t-pass { width: 173px; letter-spacing: 1px; }
.pool-link { position: absolute; left: 383px; top: 142px; color: #0000ee; text-decoration: underline; white-space: nowrap; }
.adv-head { display: flex; align-items: center; margin-top: 7px; padding-left: 4px; height: 16px; width: 673px; }
.adv-head i { flex: 1; height: 1px; background: #e2e2e4; margin-left: 5px; }
.adv-row { display: flex; align-items: center; height: 20px; margin-top: 1px; padding-left: 1px; }
.adv-row label { width: 34px; flex: none; }
.t-enc { width: 200px; padding-left: 6px; font: 12px "Noto Sans CJK SC", sans-serif; }
.dlg-foot { height: 29px; flex: none; display: flex; align-items: center; justify-content: flex-end; gap: 10px; padding-right: 14px; }

.msgbox { position: absolute; left: 837px; top: 499px; width: 264px; height: 115px; background: #f4f4f6; border: 1px solid #666; box-shadow: 0 3px 14px rgba(0,0,0,.45); display: flex; flex-direction: column; }
.msg-title { height: 31px; flex: none; background: #fff; display: flex; align-items: center; justify-content: space-between; padding: 0 14px 0 3px; font-size: 15px; }
.msg-x { width: 13px; height: 13px; color: #111; }
.msg-body { flex: 1; display: flex; align-items: flex-start; padding: 10px 0 0 11px; }
.msg-ico { width: 30px; height: 33px; }
.msg-text { margin: 14px 0 0 16px; }
.msg-foot { height: 26px; flex: none; display: flex; gap: 6px; justify-content: center; padding-bottom: 5px; }
```
